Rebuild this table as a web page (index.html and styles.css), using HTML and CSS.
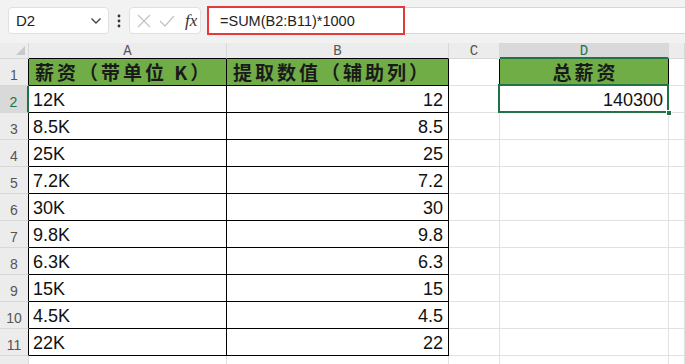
FILE: index.html
```html
<!DOCTYPE html>
<html lang="zh-CN">
<head>
<meta charset="utf-8">
<title>薪资</title>
<link rel="stylesheet" href="styles.css">
</head>
<body>
<div class="toolbar">
  <div class="namebox">
    <span class="name">D2</span>
    <svg class="chev" width="12" height="8" viewBox="0 0 12 8"><path d="M1.5 1.5 L6 6 L10.5 1.5" fill="none" stroke="#444" stroke-width="1.4"/></svg>
  </div>
  <svg class="dots" width="4" height="14" viewBox="0 0 4 14"><circle cx="2" cy="2" r="1.4" fill="#333"/><circle cx="2" cy="7" r="1.4" fill="#333"/><circle cx="2" cy="12" r="1.4" fill="#333"/></svg>
  <div class="fxbox">
    <svg width="14" height="14" viewBox="0 0 14 14"><path d="M1 1 L13 13 M13 1 L1 13" stroke="#c4c4c4" stroke-width="1.3" fill="none"/></svg>
    <svg width="16" height="14" viewBox="0 0 16 14"><path d="M1 7 L6 12 L15 2" stroke="#c4c4c4" stroke-width="1.3" fill="none"/></svg>
    <span class="fx">fx</span>
  </div>
  <div class="formula">
    <div class="formula-text">=SUM(B2:B11)*1000</div>
  </div>
</div>

<div class="sheet">
  <div class="corner"><span class="tri"></span></div>
  <div class="ch">A</div>
  <div class="ch">B</div>
  <div class="ch ch-c">C</div>
  <div class="ch ch-sel">D</div>
  <div class="ch ch-last"></div>

  <div class="rh rh-tb">1</div>
  <div class="c hd tb">薪资（带单位 K）</div>
  <div class="c hd tb">提取数值（辅助列）</div>
  <div class="c cb"></div>
  <div class="c hd hd-c tb">总薪资</div>
  <div class="c"></div>

  <div class="rh rh-tb rh-sel">2</div>
  <div class="c tb">12K</div>
  <div class="c tb num">12</div>
  <div class="c cb"></div>
  <div class="c tb num sel">140300<span class="handle"></span></div>
  <div class="c"></div>

  <div class="rh rh-tb">3</div>
  <div class="c tb">8.5K</div>
  <div class="c tb num">8.5</div>
  <div class="c"></div><div class="c"></div><div class="c"></div>

  <div class="rh rh-tb">4</div>
  <div class="c tb">25K</div>
  <div class="c tb num">25</div>
  <div class="c"></div><div class="c"></div><div class="c"></div>

  <div class="rh rh-tb">5</div>
  <div class="c tb">7.2K</div>
  <div class="c tb num">7.2</div>
  <div class="c"></div><div class="c"></div><div class="c"></div>

  <div class="rh rh-tb">6</div>
  <div class="c tb">30K</div>
  <div class="c tb num">30</div>
  <div class="c"></div><div class="c"></div><div class="c"></div>

  <div class="rh rh-tb">7</div>
  <div class="c tb">9.8K</div>
  <div class="c tb num">9.8</div>
  <div class="c"></div><div class="c"></div><div class="c"></div>

  <div class="rh rh-tb">8</div>
  <div class="c tb">6.3K</div>
  <div class="c tb num">6.3</div>
  <div class="c"></div><div class="c"></div><div class="c"></div>

  <div class="rh rh-tb">9</div>
  <div class="c tb">15K</div>
  <div class="c tb num">15</div>
  <div class="c"></div><div class="c"></div><div class="c"></div>

  <div class="rh rh-tb">10</div>
  <div class="c tb">4.5K</div>
  <div class="c tb num">4.5</div>
  <div class="c"></div><div class="c"></div><div class="c"></div>

  <div class="rh rh-tb">11</div>
  <div class="c tb">22K</div>
  <div class="c tb num">22</div>
  <div class="c"></div><div class="c"></div><div class="c"></div>

  <div class="rh rh-last"></div>
  <div class="c"></div><div class="c"></div><div class="c"></div><div class="c"></div><div class="c"></div>
</div>
</body>
</html>
```

FILE: styles.css
```css
* { box-sizing: border-box; }
html, body { margin: 0; padding: 0; }
body {
  width: 685px;
  height: 364px;
  overflow: hidden;
  background: #ffffff;
  font-family: "Liberation Sans", Arial, "Noto Sans CJK SC", sans-serif;
}

/* ---------- toolbar ---------- */
.toolbar {
  height: 43px;
  background: #f2f2f2;
  display: flex;
  align-items: flex-start;
  padding-top: 7px;
  padding-left: 8px;
}
.namebox {
  width: 101px;
  height: 27px;
  background: #fff;
  border: 1px solid #e0e0e0;
  border-radius: 4px;
  display: flex;
  align-items: center;
  justify-content: space-between;
  padding: 0 6px 0 7px;
}
.name { font-size: 15px; color: #222; }
.chev { display: block; }
.dots { display: block; margin: 7px 8px 0 8px; }
.fxbox {
  width: 72px;
  height: 27px;
  background: #fff;
  border: 1px solid #e0e0e0;
  border-radius: 4px;
  display: flex;
  align-items: center;
  gap: 8px;
  padding-left: 7px;
}
.fxbox svg { display: block; }
.fx {
  font-family: "Liberation Serif", "DejaVu Serif", serif;
  font-style: italic;
  font-size: 17px;
  color: #333;
  margin-left: 2px;
}
.formula {
  flex: 1;
  height: 27px;
  margin-left: 6px;
  background: #fff;
  border-top: 1px solid #d6d6d6;
  border-bottom: 1px solid #d6d6d6;
  position: relative;
}
.formula-text {
  position: absolute;
  left: 0;
  top: -2px;
  width: 198px;
  height: 29px;
  border: 2px solid #e5393b;
  font-size: 14.5px;
  color: #222;
  padding: 5px 0 0 11px;
}

/* ---------- sheet ---------- */
.sheet {
  display: grid;
  grid-template-columns: 29px 198px 222px 51px 169px 1fr;
  grid-template-rows: 16px repeat(11, 27px) 27px;
}
.corner {
  background: #ececec;
  border-right: 1px solid #d8d8d8;
  border-bottom: 1px solid #d8d8d8;
  position: relative;
}
.tri {
  position: absolute;
  right: 3px;
  bottom: 3px;
  width: 0;
  height: 0;
  border-left: 9px solid transparent;
  border-bottom: 9px solid #c9c9c9;
}
.ch {
  background: #ececec;
  border-right: 1px solid #d8d8d8;
  border-bottom: 1px solid #000;
  font-family: "Liberation Mono", "DejaVu Sans Mono", monospace;
  font-size: 14px;
  color: #555;
  text-align: center;
  line-height: 16px;
}
.ch-c, .ch-last { border-bottom-color: #d8d8d8; }
.ch-sel {
  background: #d9d9d9;
  color: #217346;
  border-bottom: 2px solid #217346;
}
.rh {
  background: #ececec;
  border-right: 1px solid #d8d8d8;
  border-bottom: 1px solid #d8d8d8;
  font-size: 14px;
  color: #555;
  text-align: center;
  display: flex;
  align-items: flex-end;
  justify-content: center;
  padding-bottom: 2px;
}
.rh-tb { border-right-color: #000; }
.rh-sel {
  background: #d9d9d9;
  color: #217346;
  border-right: 2px solid #217346;
}
.c {
  border-right: 1px solid #e1e1e1;
  border-bottom: 1px solid #e1e1e1;
  font-size: 18px;
  color: #111;
  display: flex;
  align-items: flex-end;
  padding: 0 5px 1px 4px;
  white-space: nowrap;
  position: relative;
}
.tb {
  border-right-color: #000;
  border-bottom-color: #000;
}
.cb { border-right-color: #000; }
.hd {
  background: #70ad47;
  font-family: "Noto Sans CJK SC", "Noto Sans", sans-serif;
  font-weight: 700;
  font-size: 19px;
  letter-spacing: 3px;
  color: #1a1a1a;
  align-items: center;
  padding: 0 0 1px 6px;
}
.hd-c { justify-content: center; padding-left: 3px; }
.num { justify-content: flex-end; }
.sel::after {
  content: "";
  position: absolute;
  left: -2px;
  top: -2px;
  right: -1px;
  bottom: -1px;
  border: 2px solid #217346;
}
.handle {
  position: absolute;
  right: -4px;
  bottom: -4px;
  width: 6px;
  height: 6px;
  background: #217346;
  border: 1px solid #fff;
  z-index: 2;
}
```
